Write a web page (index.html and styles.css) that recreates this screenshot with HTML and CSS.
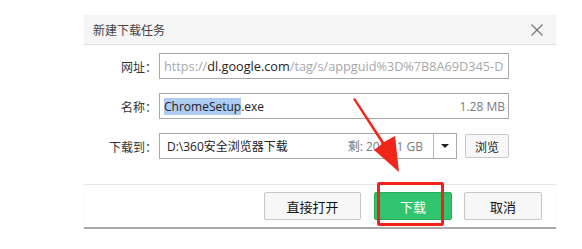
FILE: index.html
```html
<!DOCTYPE html>
<html lang="zh-CN">
<head>
    <meta charset="UTF-8">
    <title>新建下载任务</title>
    <link rel="stylesheet" href="styles.css">
</head>
<body>
    <div class="dialog">
        <div class="dialog-title">
            <span>新建下载任务</span>
            <svg class="close" width="12" height="12" viewBox="0 0 12 12">
                <path d="M0.5 0.5 L11.5 11.5 M11.5 0.5 L0.5 11.5" stroke="#777" stroke-width="1.2" fill="none"/>
            </svg>
        </div>
        <div class="dialog-body">
            <div class="row">
                <label class="row-label">网址：</label>
                <div class="field url"><span class="dim">https://</span>dl.google.com<span class="dim">/tag/s/appguid%3D%7B8A69D345-D</span></div>
            </div>
            <div class="row">
                <label class="row-label">名称：</label>
                <div class="field name">
                    <span><span class="selected">ChromeSetup</span>.exe</span>
                    <span class="hint">1.28 MB</span>
                </div>
            </div>
            <div class="row">
                <label class="row-label">下载到：</label>
                <div class="combo">
                    <div class="field dir">
                        <span>D:\360安全浏览器下载</span>
                        <span class="hint">剩: 205.31 GB</span>
                    </div>
                    <div class="combo-arrow"><span class="caret"></span></div>
                </div>
                <button class="btn-small">浏览</button>
            </div>
        </div>
        <div class="dialog-footer">
            <button class="btn btn-wide">直接打开</button>
            <button class="btn btn-primary">下载</button>
            <button class="btn">取消</button>
        </div>
    </div>

    <!-- annotation overlay -->
    <svg class="annot-arrow" width="582" height="249" viewBox="0 0 582 249">
        <polygon points="353,99 355,98 384,142 395,136 399,172 374,150 382,144" fill="#f0261b"/>
    </svg>
    <div class="annot-box"></div>
</body>
</html>
```

FILE: styles.css
```css
body {
    margin: 0;
    background-color: #ffffff;
    font-family: "Open Sans", "Noto Sans CJK SC", sans-serif;
    color: #333333;
}
.dialog {
    width: 472px;
    margin: 15px 0 0 84px;
    background: #ffffff;
}
.dialog-title {
    height: 29px;
    display: flex;
    align-items: center;
    justify-content: space-between;
    padding: 0 13px 0 9px;
    background: #f5f5f5;
    border-bottom: 1px solid #dedede;
    font-family: "Noto Sans CJK SC", sans-serif;
    font-size: 12px;
    color: #444444;
}
.close {
    display: block;
}
.dialog-body {
    display: flex;
    flex-direction: column;
    gap: 14px;
    padding: 8px 0 25px;
}
.row {
    display: flex;
    align-items: center;
    height: 26px;
}
.row-label {
    width: 73px;
    margin-right: 2px;
    text-align: right;
    font-family: "Noto Sans CJK SC", sans-serif;
    font-size: 12px;
    color: #333333;
}
.field {
    box-sizing: border-box;
    height: 26px;
    display: flex;
    align-items: center;
    justify-content: space-between;
    border: 1px solid #a9a9a9;
    font-size: 12px;
    white-space: nowrap;
    overflow: hidden;
}
.url {
    width: 350px;
    padding: 0 4px;
    justify-content: flex-start;
    font-size: 12.7px;
    color: #1e1e1e;
}
.dim {
    color: #a8a8a8;
}
.name {
    width: 350px;
    padding: 0 3px 0 4px;
    color: #222222;
}
.selected {
    background: #aecbf2;
}
.hint {
    color: #7a7a7a;
}
.combo {
    display: flex;
    width: 298px;
}
.dir {
    flex: 1;
    padding: 0 10px 0 7px;
    border-right: none;
    color: #222222;
}
.combo-arrow {
    box-sizing: border-box;
    width: 24px;
    height: 26px;
    display: flex;
    align-items: center;
    justify-content: center;
    border: 1px solid #a9a9a9;
    border-left-color: #b8b8b8;
}
.caret {
    width: 0;
    height: 0;
    border-left: 4px solid transparent;
    border-right: 4px solid transparent;
    border-top: 4px solid #222222;
}
.btn-small {
    box-sizing: border-box;
    height: 24px;
    width: 44px;
    margin-left: 8px;
    padding: 0;
    background: #f7f7f7;
    border: 1px solid #c9c9c9;
    border-radius: 2px;
    font-family: "Noto Sans CJK SC", sans-serif;
    font-size: 12px;
    color: #1a1a1a;
}
.dialog-footer {
    display: flex;
    justify-content: flex-end;
    gap: 12px;
    padding: 7px 14px 7px;
    border-top: 1px solid #e6e6e6;
    border-bottom: 2px solid #a8a8a8;
    box-shadow: 0 1px 1px rgba(0, 0, 0, 0.12);
}
.btn {
    box-sizing: border-box;
    width: 78px;
    height: 28px;
    padding: 0;
    background: #f7f7f7;
    border: 1px solid #c6c6c6;
    border-radius: 2px;
    font-family: "Noto Sans CJK SC", sans-serif;
    font-size: 13px;
    color: #111111;
}
.btn-wide {
    width: 97px;
    margin-right: 1px;
}
.btn-primary {
    background: #31c46e;
    border-color: #25ad5c;
    color: #ffffff;
}
.annot-arrow {
    position: absolute;
    left: 0;
    top: 0;
    pointer-events: none;
}
.annot-box {
    position: absolute;
    left: 377px;
    top: 182px;
    width: 61px;
    height: 38px;
    border: 3px solid #f2221a;
    border-radius: 2px;
}
```
